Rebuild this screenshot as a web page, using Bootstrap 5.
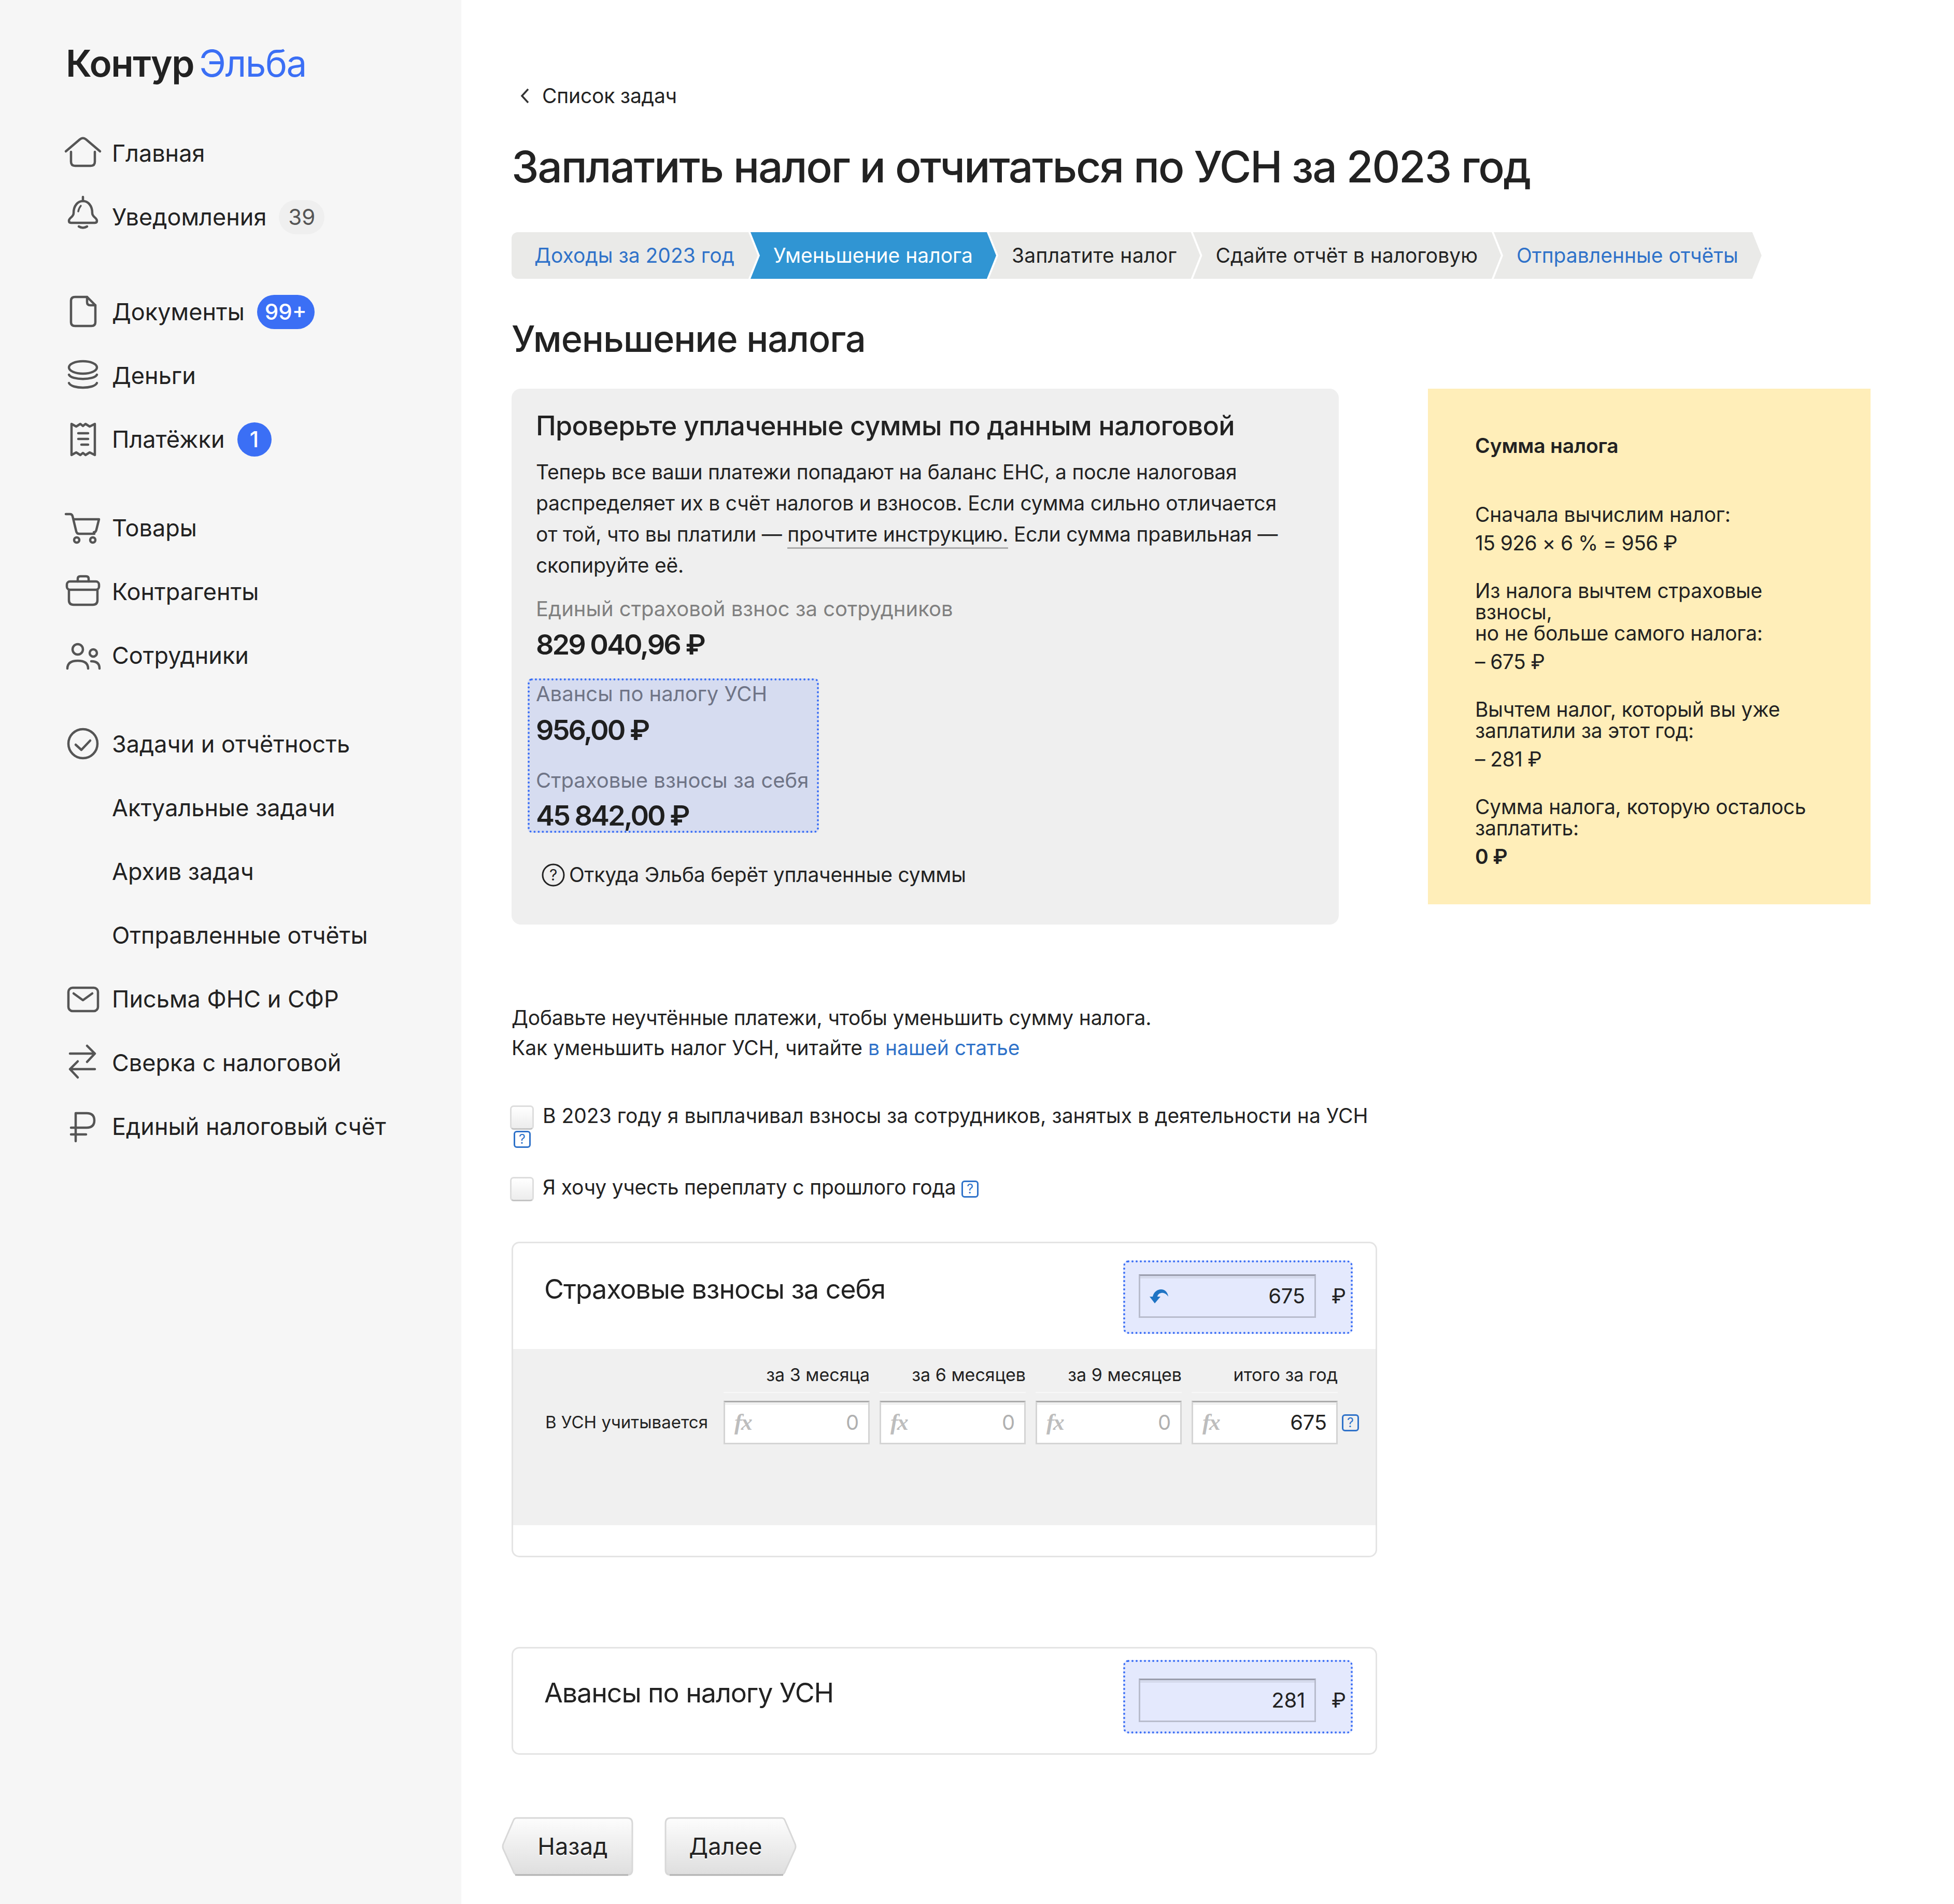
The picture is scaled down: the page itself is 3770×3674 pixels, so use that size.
<!DOCTYPE html>
<html lang="ru">
<head>
  <meta charset="UTF-8">
  <meta name="viewport" content="width=device-width, initial-scale=1.0">
  <title>Уменьшение налога | Контур Эльба</title>
  <link href="https://cdn.jsdelivr.net/npm/bootstrap@5.3.0/dist/css/bootstrap.min.css" rel="stylesheet">
  <style>
    body {
      font-family: Inter, "Noto Sans", sans-serif;
      color: #222;
      font-size: 39px;
      letter-spacing: -.2px;
      background: #fff;
    }
    .page-wrap { min-height: 3674px; }

    /* sidebar */
    .side { width: 890px; background: #f6f6f6; padding: 0 0 0 124px; flex-shrink: 0; }
    .logo { height: 74px; margin-top: 85px; margin-bottom: 75px; font-size: 71px; line-height: 74px; padding-left: 3px; letter-spacing: -1.5px; white-space: nowrap; }
    .logo b { font-weight: 600; color: #222; }
    .logo span { font-weight: 400; color: #3b6ff5; margin-left: 10px; }
    .side-item { height: 123px; font-size: 45px; letter-spacing: 0; color: #222; text-decoration: none; gap: 20px; }
    .side-item svg { width: 72px; height: 72px; flex-shrink: 0; overflow: visible; fill: none; stroke: #555; stroke-width: 4.5; stroke-linecap: round; stroke-linejoin: round; }
    .side-sub { padding-left: 92px; }
    .gap-a { margin-top: 60px; }
    .gap-b { margin-top: 48px; }
    .cnt { height: 66px; border-radius: 33px; font-size: 42px; font-weight: 400; line-height: 66px; padding: 0 18px; margin-left: 4px; }
    .cnt-grey { background: #efefef; color: #555; }
    .cnt-blue { background: #3b6ff5; color: #fff; font-weight: 500; padding: 0 15px; }
    .cnt-one { width: 66px; padding: 0; text-align: center; }

    /* main column */
    .main-col { padding: 155px 0 0 97px; width: 2880px; }
    .back-link { height: 60px; color: #222; text-decoration: none; padding-left: 16px; gap: 24px; }
    .back-link svg { width: 19px; height: 30px; fill: none; stroke: #333; stroke-width: 3.5; }
    .page-title { font-size: 84px; line-height: 100px; font-weight: 500; margin: 57px 0 76px; letter-spacing: -2.3px; white-space: nowrap; }
    .sub-title { font-size: 70px; line-height: 80px; font-weight: 500; margin: 76px 0 56px; letter-spacing: -1px; }

    /* wizard steps */
    .step { height: 90px; line-height: 90px; padding: 0 45px 0 44px; margin-left: -14px; background: #eaeae8; color: #222; letter-spacing: 0; white-space: nowrap; text-decoration: none;
      clip-path: polygon(0 0, calc(100% - 18px) 0, 100% 50%, calc(100% - 18px) 100%, 0 100%, 18px 50%); }
    .step:first-child { margin-left: 0; border-radius: 12px 0 0 12px; clip-path: polygon(0 0, calc(100% - 18px) 0, 100% 50%, calc(100% - 18px) 100%, 0 100%); }
    .step:nth-child(3) { letter-spacing: .3px; }
    .step-link { color: #2f72c9; }
    .step-on { background: #3095d3; color: #fff; }

    /* check panel */
    .check-panel { width: 1596px; height: 1034px; background: #efefef; border-radius: 18px; padding: 40px 47px 0; }
    .check-panel h3 { font-size: 52px; line-height: 64px; font-weight: 500; margin: 0 0 27px; letter-spacing: -.65px; white-space: nowrap; }
    .check-panel p { line-height: 60px; margin: 0 0 29px; white-space: nowrap; }
    .doc-link { color: #222; text-decoration: none; border-bottom: 3px solid #aaa; padding-bottom: 2px; }
    .sum-label { font-size: 40px; line-height: 50px; letter-spacing: 0; color: #808080; white-space: nowrap; }
    .sum-value { font-size: 54px; line-height: 60px; font-weight: 600; letter-spacing: -3px; color: #1f1f1f; white-space: nowrap; }
    .hl-box { width: 562px; height: 298px; margin: 35px 0 0 -16px; padding: 1px 0 0 12px; background: #d6dcf0; border: 4px dotted #3b6ff5; border-radius: 8px; }
    .hl-box .sum-label { color: #6f7486; }
    .from-row { line-height: 56px; margin-top: 53px; margin-left: 11px; gap: 8px; white-space: nowrap; }
    .from-row svg { width: 45px; height: 45px; fill: none; stroke: #222; stroke-width: 3; }
    .from-row svg text { fill: #222; stroke: none; font-size: 30px; font-family: Inter, sans-serif; }

    /* yellow note */
    .note { width: 854px; height: 995px; margin-left: 172px; background: #ffeeb9; padding: 84px 0 0 91px; line-height: 41px; }
    .note h4 { font-size: 39px; line-height: 52px; font-weight: 600; margin: 0 0 86px; letter-spacing: -.2px; }
    .note-block { margin-bottom: 51px; white-space: nowrap; }
    .note-sum { margin-top: 14px; letter-spacing: -.6px; }

    /* intro and checkboxes */
    .intro { line-height: 58px; margin: 151px 0 0; }
    .intro-second { letter-spacing: 0; }
    .intro a { color: #2f72c9; text-decoration: none; }
    .opt-line { width: 1670px; line-height: 42px; margin: 0; }
    .opt-wide { letter-spacing: 0; }
    .opt-line .form-check-input { width: 46px; height: 47px; margin: -8px 17px -8px -3px; vertical-align: middle; border: 3px solid #ddd; border-bottom-color: #c4c4c4; border-radius: 7px; background: linear-gradient(#fff, #ececec); float: none; }
    .help-mark { display: inline-block; width: 33px; height: 33px; border: 3px solid #2f72c9; border-radius: 6px; color: #2f72c9; font-size: 25px; line-height: 27px; letter-spacing: 0; text-align: center; vertical-align: middle; }

    /* tax cards */
    .tax-card { width: 1670px; border: 3px solid #e4e4e4; border-radius: 15px; overflow: hidden; }
    .tax-head { padding: 0 44px 0 60px; }
    .tax-head h5 { font-size: 52px; line-height: 70px; font-weight: 400; margin: 0; letter-spacing: -1.1px; white-space: nowrap; }
    .amount-box { width: 443px; height: 142px; background: #e4e9fd; border: 4px dotted #3b6ff5; border-radius: 10px; padding-left: 26px; gap: 30px; font-size: 40px; }
    .amount-box .amt-input { width: 342px; height: 84px; border-color: #b8bccd; border-top-color: #999cac; box-shadow: inset 0 5px 0 #d5daec; background: transparent; }
    .amt-input { display: flex; align-items: center; justify-content: space-between; border: 3px solid #d4d4d4; border-top-color: #ababab; border-radius: 0; box-shadow: inset 0 5px 0 #f2f2f2; background: #fff; padding: 0 18px 0 18px; font-size: 40px; line-height: 1; color: #222; }
    .amt-input .empty { color: #b0b0b0; }
    .amt-input i { font-family: "Liberation Serif", serif; font-weight: 700; font-size: 44px; letter-spacing: -2px; color: #bdbdbd; }
    .tax-band { height: 340px; background: #f0f0f0; padding: 25px 0 0 62px; }
    .band-cell { width: 282px; height: 60px; line-height: 50px; font-size: 34px; letter-spacing: 0; text-align: right; white-space: nowrap; border-bottom: 2px solid #f8f8f8; }
    .band-label { width: 344px; font-size: 33px; letter-spacing: 0; white-space: nowrap; }
    .band-cols { gap: 19px; }
    .band-cols .amt-input { width: 282px; height: 84px; }
    .nav-btn { width: 254px; height: 114px; font-size: 45px; letter-spacing: .2px; color: #222; line-height: 114px; padding: 0; border: 0; background: transparent; text-shadow: 0 2px 0 #fff; }
    .nav-btn svg { position: absolute; inset: 0; z-index: -1; }
  </style>
</head>
<body>
<div class="d-flex page-wrap">

  <aside class="side">
    <div class="logo"><b>Контур</b><span>Эльба</span></div>
    <nav class="d-flex flex-column">
      <a class="side-item d-flex align-items-center" href="#">
        <svg viewBox="0 0 72 72"><path d="M3 32L30 9Q36 4 42 9L69 32"/><path d="M13 33V52Q13 60 21 60H51Q59 60 59 52V33"/></svg>Главная</a>
      <a class="side-item d-flex align-items-center" href="#">
        <svg viewBox="0 0 72 72"><path d="M36 -3V5"/><path d="M18 28C18 14 26 5 36 5C46 5 54 14 54 28C54 36 63 37 63 43Q63 47 59 47H13Q9 47 9 43C9 37 18 36 18 28Z"/><path d="M27 25Q28 19 32 14" stroke-width="3.5"/><path d="M28 54Q36 59 44 54"/></svg>Уведомления<span class="badge cnt cnt-grey">39</span></a>

      <a class="side-item d-flex align-items-center gap-a" href="#">
        <svg viewBox="0 0 72 72"><path d="M13 14Q13 7 21 7H44L60 23V56Q60 63 52 63H21Q13 63 13 56Z"/><path d="M44 7V17Q44 23 50 23H60"/></svg>Документы<span class="badge cnt cnt-blue">99+</span></a>
      <a class="side-item d-flex align-items-center" href="#">
        <svg viewBox="0 0 72 72"><ellipse cx="36" cy="20" rx="27" ry="12"/><path d="M9 34C14 45 58 45 63 34"/><path d="M9 50C14 62 58 62 63 50"/></svg>Деньги</a>
      <a class="side-item d-flex align-items-center" href="#">
        <svg viewBox="0 0 72 72"><path d="M14 6V66L23 61L31 66L36 62L41 66L49 61L59 66V6L49 11L41 6L36 10L31 6L23 11Z"/><path d="M27 24H46M27 35H46M33 46H46"/></svg>Платёжки<span class="badge cnt cnt-blue cnt-one">1</span></a>

      <a class="side-item d-flex align-items-center gap-b" href="#">
        <svg viewBox="0 0 72 72"><path d="M3 9H11Q15 9 16 13L23 42Q24 47 29 47H58"/><path d="M18 19H67L62 39Q61 44 57 44"/><circle cx="24" cy="59" r="5"/><circle cx="55" cy="59" r="5"/></svg>Товары</a>
      <a class="side-item d-flex align-items-center" href="#">
        <svg viewBox="0 0 72 72"><rect x="5" y="16" width="62" height="16" rx="6"/><path d="M9 32V52Q9 61 18 61H55Q64 61 64 52V32"/><path d="M26 16V11Q26 6 31 6H42Q47 6 47 11V16"/></svg>Контрагенты</a>
      <a class="side-item d-flex align-items-center" href="#">
        <svg viewBox="0 0 72 72"><circle cx="26" cy="24" r="10"/><path d="M6 61Q6 46 26 46Q46 46 46 61"/><circle cx="56" cy="31" r="7"/><path d="M52 47Q68 47 68 61"/></svg>Сотрудники</a>

      <a class="side-item d-flex align-items-center gap-b" href="#">
        <svg viewBox="0 0 72 72"><circle cx="36" cy="35" r="28"/><path d="M22 37L33 47L50 29"/></svg>Задачи и отчётность</a>
      <a class="side-item side-sub d-flex align-items-center" href="#">Актуальные задачи</a>
      <a class="side-item side-sub d-flex align-items-center" href="#">Архив задач</a>
      <a class="side-item side-sub d-flex align-items-center" href="#">Отправленные отчёты</a>
      <a class="side-item d-flex align-items-center" href="#">
        <svg viewBox="0 0 72 72"><rect x="8" y="14" width="57" height="45" rx="8"/><path d="M18 25L36 38L54 25"/></svg>Письма ФНС и СФР</a>
      <a class="side-item d-flex align-items-center" href="#">
        <svg viewBox="0 0 72 72"><path d="M11 18H59M44 3L59 18L44 34"/><path d="M59 48H11M26 33L11 48L26 64"/></svg>Сверка с налоговой</a>
      <a class="side-item d-flex align-items-center" href="#">
        <svg viewBox="0 0 72 72"><path d="M22 64V10H43Q58 10 58 24Q58 38 43 38H13"/><path d="M13 51H42"/></svg>Единый налоговый счёт</a>
    </nav>
  </aside>

  <main class="main-col">
    <a class="back-link d-flex align-items-center" href="#"><svg viewBox="0 0 19 30"><path d="M16 2L4 15L16 28"/></svg>Список задач</a>
    <h1 class="page-title">Заплатить налог и отчитаться по УСН за 2023 год</h1>

    <div class="d-flex">
      <a class="step step-link" href="#">Доходы за 2023 год</a>
      <a class="step step-on" href="#">Уменьшение налога</a>
      <a class="step" href="#">Заплатите налог</a>
      <a class="step" href="#">Сдайте отчёт в налоговую</a>
      <a class="step step-link" href="#">Отправленные отчёты</a>
    </div>

    <h2 class="sub-title">Уменьшение налога</h2>

    <div class="d-flex align-items-start">
      <section class="check-panel">
        <h3>Проверьте уплаченные суммы по данным налоговой</h3>
        <p>Теперь все ваши платежи попадают на баланс ЕНС, а после налоговая<br>
          распределяет их в счёт налогов и взносов. Если сумма сильно отличается<br>
          от той, что вы платили — <a class="doc-link" href="#">прочтите инструкцию.</a> Если сумма правильная —<br>
          скопируйте её.</p>
        <div class="sum-label">Единый страховой взнос за сотрудников</div>
        <div class="sum-value" style="margin-top:14px">829 040,96 ₽</div>
        <div class="hl-box">
          <div class="sum-label">Авансы по налогу УСН</div>
          <div class="sum-value" style="margin-top:15px">956,00 ₽</div>
          <div class="sum-label" style="margin-top:42px">Страховые взносы за себя</div>
          <div class="sum-value" style="margin-top:13px">45 842,00 ₽</div>
        </div>
        <div class="from-row d-flex align-items-center">
          <svg viewBox="0 0 45 45"><circle cx="22.500" cy="22.500" r="20.500"/><text x="22.500" y="33" text-anchor="middle">?</text></svg>
          Откуда Эльба берёт уплаченные суммы
        </div>
      </section>

      <aside class="note">
        <h4>Сумма налога</h4>
        <div class="note-block">Сначала вычислим налог:<div class="note-sum">15 926 × 6 % = 956 ₽</div></div>
        <div class="note-block">Из налога вычтем страховые<br>взносы,<br>но не больше самого налога:<div class="note-sum">– 675 ₽</div></div>
        <div class="note-block">Вычтем налог, который вы уже<br>заплатили за этот год:<div class="note-sum">– 281 ₽</div></div>
        <div class="note-block">Сумма налога, которую осталось<br>заплатить:<div class="note-sum fw-semibold">0 ₽</div></div>
      </aside>
    </div>

    <p class="intro">Добавьте неучтённые платежи, чтобы уменьшить сумму налога.<br>
      <span class="intro-second">Как уменьшить налог УСН, читайте <a href="#">в нашей статье</a></span></p>

    <p class="opt-line opt-wide" style="margin-top:81px"><input class="form-check-input" type="checkbox" aria-label="взносы за сотрудников">В 2023 году я выплачивал взносы за сотрудников, занятых в деятельности на УСН <span class="help-mark ms-1">?</span></p>
    <p class="opt-line" style="margin-top:54px"><input class="form-check-input" type="checkbox" aria-label="переплата">Я хочу учесть переплату с прошлого года <span class="help-mark">?</span></p>

    <section class="card tax-card" style="margin-top:84px;height:609px">
      <div class="tax-head d-flex justify-content-between align-items-start" style="height:204px">
        <h5 style="margin-top:54px">Страховые взносы за себя</h5>
        <div class="amount-box d-flex align-items-center" style="margin-top:33px;padding-bottom:4px">
          <div class="amt-input">
            <svg width="36" height="27" viewBox="0 0 36 27"><path fill="#1f74c4" d="M0 14H6C8 5 15 0 22 0C30 0 35 6 36 14C32 8 27 6 22 7C18 8 16 10 15 14H21L10 27Z"/></svg>
            <span>675</span>
          </div>
          <span>₽</span>
        </div>
      </div>
      <div class="tax-band">
        <div class="d-flex band-cols" style="margin-left:344px;margin-bottom:15px">
          <div class="band-cell">за 3 месяца</div>
          <div class="band-cell">за 6 месяцев</div>
          <div class="band-cell">за 9 месяцев</div>
          <div class="band-cell">итого за год</div>
        </div>
        <div class="d-flex align-items-center">
          <div class="band-label">В УСН учитывается</div>
          <div class="d-flex band-cols align-items-center">
            <div class="amt-input"><i>fx</i><span class="empty">0</span></div>
            <div class="amt-input"><i>fx</i><span class="empty">0</span></div>
            <div class="amt-input"><i>fx</i><span class="empty">0</span></div>
            <div class="amt-input"><i>fx</i><span>675</span></div>
          </div>
          <span class="help-mark ms-2">?</span>
        </div>
      </div>
    </section>

    <section class="card tax-card" style="margin-top:173px;height:208px">
      <div class="tax-head d-flex justify-content-between align-items-start">
        <h5 style="margin-top:51px">Авансы по налогу УСН</h5>
        <div class="amount-box d-flex align-items-center" style="margin-top:22px;padding-top:14px">
          <div class="amt-input"><span></span><span>281</span></div>
          <span>₽</span>
        </div>
      </div>
    </section>

    <div class="d-flex" style="margin:120px 0 0 -19px;gap:60px">
      <button class="btn nav-btn position-relative" type="button" style="padding-left:20px">
        <svg width="254" height="114" viewBox="0 0 254 114"><defs><linearGradient id="btnFill" x1="0" y1="0" x2="0" y2="1"><stop offset="0" stop-color="#fdfdfd"/><stop offset="1" stop-color="#dedede"/></linearGradient></defs><path fill="url(#btnFill)" stroke="#d8d8d8" stroke-width="3" d="M29 2H242Q252 2 252 12V102Q252 112 242 112H32Q24 112 22 104L3 62Q1 57 3 52L22 8Q24 2 29 2Z"/><path fill="none" stroke="#b3b3b3" stroke-width="3" d="M26 112H244"/></svg>Назад</button>
      <button class="btn nav-btn position-relative" type="button" style="width:256px;padding-right:20px">
        <svg width="256" height="114" viewBox="0 0 256 114"><path fill="url(#btnFill)" stroke="#d8d8d8" stroke-width="3" d="M12 2H226Q231 2 233 8L252 52Q254 57 252 62L233 104Q231 112 223 112H12Q2 112 2 102V12Q2 2 12 2Z"/><path fill="none" stroke="#b3b3b3" stroke-width="3" d="M10 112H229"/></svg>Далее</button>
    </div>
  </main>
</div>
<script src="https://cdn.jsdelivr.net/npm/bootstrap@5.3.0/dist/js/bootstrap.bundle.min.js"></script>
</body>
</html>
